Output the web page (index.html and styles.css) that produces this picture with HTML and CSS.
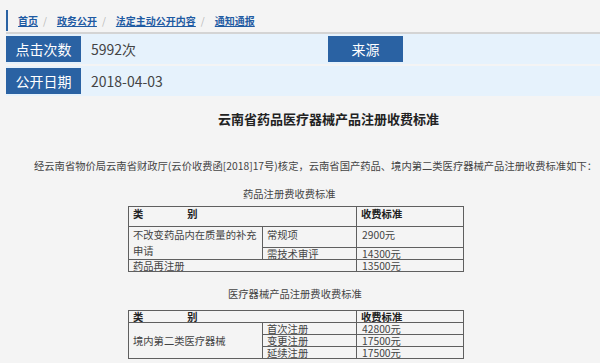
FILE: index.html
```html
<!DOCTYPE html>
<html lang="zh-CN">
<head>
<meta charset="utf-8">
<title>云南省药品医疗器械产品注册收费标准</title>
<link rel="stylesheet" href="styles.css">
</head>
<body>
<div class="page">
  <div class="crumb-wrap">
    <div class="crumb">
      <a class="crumb-link" href="#">首页</a><span class="sep">/</span>
      <a class="crumb-link" href="#">政务公开</a><span class="sep">/</span>
      <a class="crumb-link" href="#">法定主动公开内容</a><span class="sep">/</span>
      <a class="crumb-link" href="#">通知通报</a>
    </div>
  </div>

  <div class="info-row">
    <div class="info-label">点击次数</div>
    <div class="info-value">5992次</div>
    <div class="info-label">来源</div>
    <div class="info-value"></div>
  </div>
  <div class="info-row second">
    <div class="info-label">公开日期</div>
    <div class="info-value">2018-04-03</div>
  </div>

  <h1 class="title">云南省药品医疗器械产品注册收费标准</h1>

  <p class="lead">经云南省物价局云南省财政厅(云价收费函[2018]17号)核定，云南省国产药品、境内第二类医疗器械产品注册收费标准如下：</p>

  <p class="caption cap1">药品注册费收费标准</p>
  <table class="fee">
    <colgroup><col class="c1"><col class="c2"><col class="c3"></colgroup>
    <tr class="h20"><td colspan="2" class="th">类<span class="gap"></span>别</td><td class="th">收费标准</td></tr>
    <tr class="h21"><td rowspan="2" class="multi">不改变药品内在质量的补充申请</td><td>常规项</td><td class="num">2900元</td></tr>
    <tr class="h12"><td>需技术审评</td><td class="num">14300元</td></tr>
    <tr class="h12"><td colspan="2">药品再注册</td><td class="num">13500元</td></tr>
  </table>

  <p class="caption cap2">医疗器械产品注册费收费标准</p>
  <table class="fee t2">
    <colgroup><col class="c1"><col class="c2"><col class="c3"></colgroup>
    <tr class="h12"><td colspan="2" class="th">类<span class="gap"></span>别</td><td class="th">收费标准</td></tr>
    <tr class="h12"><td rowspan="3" class="mid">境内第二类医疗器械</td><td>首次注册</td><td class="num">42800元</td></tr>
    <tr class="h12"><td>变更注册</td><td class="num">17500元</td></tr>
    <tr class="h12"><td>延续注册</td><td class="num">17500元</td></tr>
  </table>
</div>
</body>
</html>
```
FILE: styles.css
```css
html, body {
  margin: 0;
  padding: 0;
  overflow: hidden;
  background: #f4f4f4;
}
body {
  font-family: "Noto Sans CJK SC", "Noto Sans", sans-serif;
  color: #333;
}
.page {
  width: 645px;
  margin-left: 6px;
  padding-top: 10px;
}
.crumb-wrap {
  border-bottom: 2px solid #d4d4d4;
  padding-bottom: 1px;
}
.crumb {
  height: 21px;
  border-left: 2px solid #2a62a3;
  padding-left: 10px;
  display: flex;
  align-items: center;
  font-size: 10px;
  font-weight: bold;
}
.crumb-link {
  color: #1f5ba3;
  text-decoration: underline;
}
.sep {
  color: #b8b8b8;
  font-weight: normal;
  margin: 0 10px 0 5px;
}
.info-row {
  display: flex;
  background: #e6f2fc;
  padding: 2px 0;
}
.info-row.second {
  margin-top: 2px;
}
.info-label {
  width: 75px;
  height: 26px;
  background: #2a62a3;
  color: #fff;
  font-size: 14px;
  display: flex;
  align-items: center;
  justify-content: center;
  flex: none;
}
.info-value {
  width: 237px;
  padding-left: 10px;
  font-size: 14px;
  color: #444;
  display: flex;
  align-items: center;
  flex: none;
}
.title {
  margin: 14px 0 0;
  font-size: 13px;
  line-height: 18px;
  text-align: center;
  color: #222;
  font-weight: bold;
}
.lead {
  margin: 31px 0 0;
  padding-left: 28px;
  font-size: 10.3px;
  line-height: 14px;
  color: #444;
  white-space: nowrap;
}
.caption {
  margin: 0;
  font-size: 10.3px;
  line-height: 14px;
  color: #444;
}
.cap1 {
  margin-top: 14px;
  padding-left: 237px;
}
.cap2 {
  margin-top: 15px;
  padding-left: 222px;
}
.fee {
  border-collapse: collapse;
  table-layout: fixed;
  width: 335px;
  margin: 5px 0 0 122px;
  font-size: 10.3px;
  color: #444;
}
.fee.t2 {
  margin-top: 9px;
}
.c1 { width: 134px; }
.c2 { width: 94px; }
.c3 { width: 107px; }
.fee td {
  border: 1px solid #5f5f5f;
  padding: 0 4px;
  line-height: 11px;
  vertical-align: top;
  white-space: nowrap;
  overflow: hidden;
}
.fee td.num {
  padding-left: 5px;
}
.fee td.th {
  font-weight: bold;
  color: #222;
  padding-top: 1px;
}
.fee tr.h12 td.th {
  padding-top: 0;
}
.gap {
  display: inline-block;
  width: 44px;
  height: 1px;
}
.fee td.multi {
  white-space: normal;
  line-height: 16px;
  padding-top: 0;
}
.fee td.mid {
  vertical-align: middle;
}
.h20 { height: 20px; }
.h21 { height: 21px; }
.h21 td { padding-top: 2px; }
.h12 { height: 12px; }
```
